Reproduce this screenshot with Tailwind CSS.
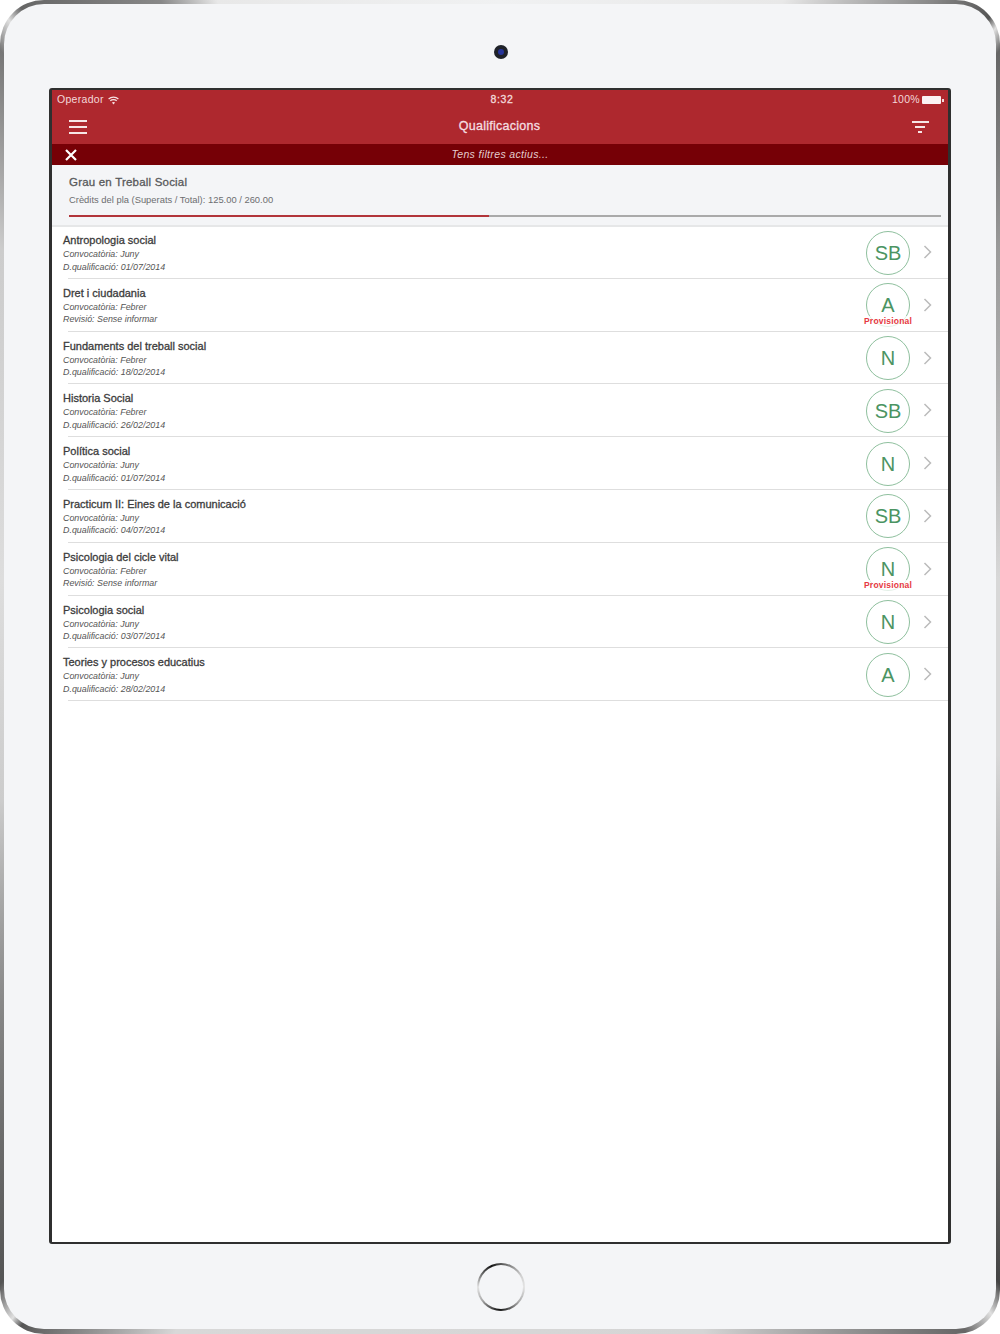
<!DOCTYPE html>
<html lang="en">
<head>
  <meta charset="UTF-8" />
  <title>Qualificacions</title>
  <script src="https://cdn.jsdelivr.net/npm/@tailwindcss/browser@4"></script>
</head>
<body class="bg-white font-['Liberation_Sans',Arial,sans-serif]">

  <!-- device frame -->
  <div class="w-[1000px] h-[1334px] rounded-[44px] p-[4px] pb-[5px] bg-[conic-gradient(from_0deg,#f0f1f2_0deg,#e8e8e8_23deg,#888_33deg,#555_37deg,#e0e0e0_37.8deg,#666_39deg,#9a9a9a_50deg,#d8d8d8_80deg,#d8d8d8_100deg,#999_125deg,#444_141deg,#e0e0e0_142.8deg,#666_145deg,#d5d5d5_163deg,#d8d8d8_206deg,#666_215deg,#555_216deg,#e0e0e0_216.8deg,#555_219deg,#888_236deg,#cccccc_255deg,#dddddd_280deg,#cccccc_310deg,#777_321deg,#e0e0e0_322.8deg,#666_324deg,#888_333deg,#e8e8e8_337deg,#f0f1f2_360deg)]">
    <div class="relative h-full rounded-[40px] bg-[#f4f5f7] pt-[84px] px-[45px]">

      <!-- camera -->
      <div class="absolute left-[490px] top-[41px] w-[14px] h-[14px] rounded-full bg-[#1f2229] flex items-center justify-center">
        <div class="w-[6px] h-[6px] rounded-full bg-[#26349a]"></div>
      </div>

      <!-- screen -->
      <div class="h-[1156px] bg-white border-x-[3px] border-y-2 border-[#2f2f2f] rounded-[3px] flex flex-col">

        <!-- status bar -->
        <div class="h-[20px] bg-[#ae282e] text-[#f3d9da] text-[10.5px] tracking-[0.3px] pl-[5px] pr-[4px] grid grid-cols-3 items-center">
          <div class="flex items-center gap-[4px]">
            <span>Operador</span>
            <svg width="11" height="9" viewBox="0 0 11 9" fill="none" stroke="#f6e3e3" stroke-width="1.2">
              <path d="M0.6 3 C3.3 0.4 7.7 0.4 10.4 3" />
              <path d="M2.3 4.8 C4 3.2 7 3.2 8.7 4.8" />
              <path d="M5.5 8.4 L3.9 6.6 C4.8 5.9 6.2 5.9 7.1 6.6 Z" fill="#f6e3e3" stroke="none" />
            </svg>
          </div>
          <div class="text-center pl-[3px] text-[10.5px] tracking-[0.6px] [-webkit-text-stroke:0.3px_#f3d9da]">8:32</div>
          <div class="flex items-center justify-end gap-[2px]">
            <span>100%</span>
            <div class="w-[19px] h-[8px] bg-[#fbf3f3] rounded-[1px]"></div>
            <div class="w-[2px] h-[3px] bg-[#f3d9da] -ml-[1px]"></div>
          </div>
        </div>

        <!-- nav bar -->
        <div class="h-[34px] bg-[#ae282e] flex items-center justify-between pl-[17px] pr-[19px]">
          <div class="w-[18px] flex flex-col gap-[4px]">
            <div class="h-[2px] bg-[#f7e6e6]"></div>
            <div class="h-[2px] bg-[#f7e6e6]"></div>
            <div class="h-[2px] bg-[#f7e6e6]"></div>
          </div>
          <div class="text-[12.5px] text-[#f5dfe0] tracking-[0.25px] pb-[1px] [-webkit-text-stroke:0.3px_#f5dfe0]">Qualificacions</div>
          <div class="w-[17px] flex flex-col items-center gap-[3px]">
            <div class="w-[17px] h-[2px] bg-[#f7e6e6]"></div>
            <div class="w-[10px] h-[2px] bg-[#f7e6e6]"></div>
            <div class="w-[4px] h-[2px] bg-[#f7e6e6]"></div>
          </div>
        </div>

        <!-- active filters -->
        <div class="relative h-[21px] bg-[#760006] flex items-center justify-center pt-[1px]">
          <svg class="absolute left-[13px] top-[5px]" width="12" height="12" viewBox="0 0 12 12" stroke="#fff" stroke-width="2.2">
            <path d="M1 1 L11 11 M11 1 L1 11" />
          </svg>
          <span class="text-[10.5px] italic text-[#e5cdce] tracking-[0.35px]">Tens filtres actius...</span>
        </div>

        <!-- plan summary -->
        <div class="h-[62px] bg-[#f4f5f7] border-b-2 border-[#e6e7e8] pl-[17px] pr-[7px] pt-[10px]">
          <div class="text-[11.5px] text-[#58595b] leading-[14px] tracking-[0.2px] [-webkit-text-stroke:0.3px_#58595b]">Grau en Treball Social</div>
          <div class="text-[9.4px] text-[#6d6e70] leading-[12px] mt-[5px]">Crèdits del pla (Superats / Total): 125.00 / 260.00</div>
          <div class="flex h-[2px] mt-[9px]">
            <div class="w-[420px] bg-[#b2353a]"></div>
            <div class="flex-1 bg-[#aaaaaa]"></div>
          </div>
        </div>

        <!-- subjects, filled in below -->
        <div id="list"></div>
      </div>

      <!-- home button -->
      <div class="mt-[19px] ml-[428px] w-[48px] h-[48px] rounded-full p-[2px] bg-[conic-gradient(from_0deg,#555_0deg,#d0d0d0_60deg,#e4e4e4_90deg,#aaa_130deg,#111_185deg,#aaa_235deg,#e4e4e4_270deg,#777_300deg,#111_335deg,#555_360deg)]">
        <div class="w-full h-full rounded-full bg-[#f4f5f7]"></div>
      </div>
    </div>
  </div>

  <script>
    const subjects = [
      { name: "Antropologia social", call: "Juny", extra: "D.qualificació: 01/07/2014", grade: "SB" },
      { name: "Dret i ciudadania", call: "Febrer", extra: "Revisió: Sense informar", grade: "A", provisional: true },
      { name: "Fundaments del treball social", call: "Febrer", extra: "D.qualificació: 18/02/2014", grade: "N" },
      { name: "Historia Social", call: "Febrer", extra: "D.qualificació: 26/02/2014", grade: "SB" },
      { name: "Política social", call: "Juny", extra: "D.qualificació: 01/07/2014", grade: "N" },
      { name: "Practicum II: Eines de la comunicació", call: "Juny", extra: "D.qualificació: 04/07/2014", grade: "SB" },
      { name: "Psicologia del cicle vital", call: "Febrer", extra: "Revisió: Sense informar", grade: "N", provisional: true },
      { name: "Psicologia social", call: "Juny", extra: "D.qualificació: 03/07/2014", grade: "N" },
      { name: "Teories y procesos educatius", call: "Juny", extra: "D.qualificació: 28/02/2014", grade: "A" }
    ];

    const list = document.getElementById("list");
    subjects.forEach((s, i) => {
      list.insertAdjacentHTML("beforeend", `
        <div class="relative ${i === 0 ? 'h-[51.8px] pt-[7px]' : 'h-[52.8px] pt-[8px]'} pl-[11px]">
          <div class="text-[11px] text-[#3c3c3c] leading-[13px] [-webkit-text-stroke:0.3px_#3c3c3c]">${s.name}</div>
          <div class="text-[8.9px] italic text-[#555] leading-[12.5px] mt-[1px]">Convocatòria: ${s.call}</div>
          <div class="text-[8.9px] italic text-[#555] leading-[12.5px]">${s.extra}</div>
          <div class="absolute left-[814px] ${i === 0 ? 'top-[3.5px]' : 'top-[4.5px]'} w-[44px] h-[44px] rounded-full border border-[#8fc09e] text-[#4b9462] text-[20px] flex items-center justify-center">${s.grade}</div>
          ${s.provisional ? `<div class="absolute left-[812px] top-[37px] bg-white/75 text-[8.5px] font-bold text-[#e6393f] leading-[11px] tracking-[0.2px]">Provisional</div>` : ""}
          <svg class="absolute left-[871px] ${i === 0 ? 'top-[18px]' : 'top-[19px]'}" width="9" height="14" viewBox="0 0 9 14" fill="none" stroke="#bbb" stroke-width="1.5"><path d="M1.5 1 L7.5 7 L1.5 13" /></svg>
          <div class="absolute left-[16px] right-0 bottom-0 h-[1px] bg-[#dedede]"></div>
        </div>
      `);
    });
  </script>

</body>
</html>
